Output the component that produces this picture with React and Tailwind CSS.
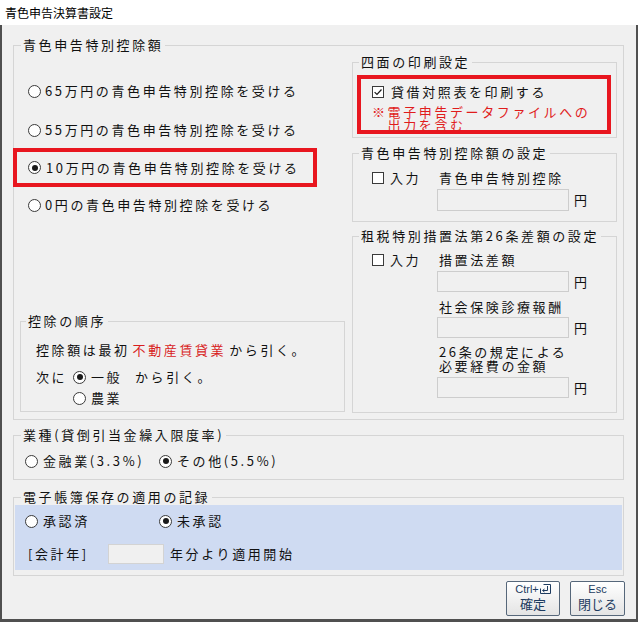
import React from "react";

const Radio = ({ checked }) => (
  <span className="inline-flex shrink-0 w-[13px] h-[13px] rounded-full border border-[#3a3a3a] bg-white items-center justify-center">
    {checked && <span className="block w-[6px] h-[6px] rounded-full bg-[#1a1a1a]" />}
  </span>
);

const Check = ({ checked }) => (
  <span className="inline-flex shrink-0 w-[12px] h-[12px] border border-[#3a3a3a] bg-white items-center justify-center">
    {checked && (
      <svg width="10" height="10" viewBox="0 0 10 10">
        <path d="M1.6 5.1 L4 7.5 L8.5 2.5" fill="none" stroke="#1a1a1a" strokeWidth="1.2" />
      </svg>
    )}
  </span>
);

const Field = ({ className }) => (
  <div className={`w-[132px] bg-[#f0f0f0] border border-[#cdcdcd] ${className}`} />
);

const EnterIcon = () => (
  <svg width="11" height="10" viewBox="0 0 11 10" className="ml-[1px]">
    <path d="M3.5 0.5 H10.5 V9.5 H0.5 V4.5" fill="none" stroke="#1d3b5f" strokeWidth="1" />
    <path d="M7.5 2 V6.5 H3" fill="none" stroke="#1d3b5f" strokeWidth="1" />
    <path d="M4.5 5 L2.5 6.5 L4.5 8" fill="none" stroke="#1d3b5f" strokeWidth="1" />
  </svg>
);

export default function App() {
  return (
    <div className="w-[638px] h-[622px] flex flex-col bg-[#f0f0f0] text-[#111] text-[13px] tracking-[2.6px] font-['Noto_Sans_CJK_JP',sans-serif] overflow-hidden">
      <div className="h-[25px] shrink-0 bg-white flex items-center pl-[5px] text-[12px] tracking-normal text-black">
        青色申告決算書設定
      </div>
      <div className="flex-1 flex flex-col border-x-2 border-b-[3px] border-[#505050] pl-[11px] pt-[12px]">
        {/* Outer group */}
        <fieldset className="w-[611px] h-[383px] border border-[#d5d5d5]">
          <legend className="ml-[7px] px-[2px] leading-[16px]">青色申告特別控除額</legend>
          <div className="flex">
            {/* Left column */}
            <div className="w-[338px] flex flex-col">
              <div className="mt-[28px] h-[20px] flex items-center pl-[14px]">
                <Radio />
                <span className="ml-[4px]">65万円の青色申告特別控除を受ける</span>
              </div>
              <div className="mt-[19px] h-[20px] flex items-center pl-[14px]">
                <Radio />
                <span className="ml-[4px]">55万円の青色申告特別控除を受ける</span>
              </div>
              <div className="mt-[8px] -ml-[1px] w-[304px] h-[39px] border-4 border-[#e8161f] flex items-center pl-[11px]">
                <Radio checked />
                <span className="ml-[5px]">10万円の青色申告特別控除を受ける</span>
              </div>
              <div className="mt-[8px] h-[20px] flex items-center pl-[14px]">
                <Radio />
                <span className="ml-[4px]">0円の青色申告特別控除を受ける</span>
              </div>

              <fieldset className="mt-[98px] ml-[6px] w-[325px] h-[99px] border border-[#d5d5d5]">
                <legend className="ml-[5px] px-[2px] leading-[16px]">控除の順序</legend>
                <div className="pt-[11px] pl-[15px] flex flex-col">
                  <div className="h-[20px] flex items-center">
                    <span>控除額は最初</span>
                    <span className="ml-[3px] text-[#d81e1e]">不動産賃貸業</span>
                    <span className="ml-[3px]">から引く。</span>
                  </div>
                  <div className="mt-[7px] h-[20px] flex items-center">
                    <span className="w-[37px]">次に</span>
                    <Radio checked />
                    <span className="ml-[5px] w-[44px]">一般</span>
                    <span>から引く。</span>
                  </div>
                  <div className="mt-[1px] h-[20px] flex items-center pl-[37px]">
                    <Radio />
                    <span className="ml-[5px]">農業</span>
                  </div>
                </div>
              </fieldset>
            </div>

            {/* Right column */}
            <div className="w-[265px] flex flex-col">
              <fieldset className="mt-[1px] h-[84px] border border-[#d5d5d5]">
                <legend className="ml-[6px] px-[2px] leading-[16px]">四面の印刷設定</legend>
                <div className="mt-[5px] ml-[4px] w-[254px] h-[59px] border-4 border-[#e8161f] flex flex-col pl-[11px] pt-[5px]">
                  <div className="h-[16px] flex items-center">
                    <Check checked />
                    <span className="ml-[7px] leading-[16px]">貸借対照表を印刷する</span>
                  </div>
                  <div className="mt-[5px] flex flex-col text-[#e01c1c]">
                    <div className="h-[13px] leading-[13px]">※電子申告データファイルへの</div>
                    <div className="h-[13px] leading-[13px] pl-[15.6px]">出力を含む</div>
                  </div>
                </div>
              </fieldset>

              <fieldset className="mt-[7px] h-[77px] border border-[#d5d5d5]">
                <legend className="ml-[6px] px-[2px] leading-[16px]">青色申告特別控除額の設定</legend>
                <div className="flex pt-[9px]">
                  <div className="w-[84px] pl-[19px] h-[16px] flex items-center">
                    <Check />
                    <span className="ml-[6px] leading-[16px]">入力</span>
                  </div>
                  <div className="flex flex-col">
                    <div className="h-[16px] leading-[16px] pl-[2px]">青色申告特別控除</div>
                    <div className="mt-[3px] flex items-center">
                      <Field className="h-[22px]" />
                      <span className="ml-[5px]">円</span>
                    </div>
                  </div>
                </div>
              </fieldset>

              <fieldset className="mt-[6px] h-[185px] border border-[#d5d5d5]">
                <legend className="ml-[6px] px-[2px] leading-[16px]">租税特別措置法第26条差額の設定</legend>
                <div className="flex pt-[8px]">
                  <div className="w-[84px] pl-[19px] h-[16px] flex items-center">
                    <Check />
                    <span className="ml-[6px] leading-[16px]">入力</span>
                  </div>
                  <div className="flex flex-col">
                    <div className="h-[16px] leading-[16px] pl-[2px]">措置法差額</div>
                    <div className="mt-[3px] flex items-center">
                      <Field className="h-[21px]" />
                      <span className="ml-[5px]">円</span>
                    </div>
                    <div className="mt-[7px] h-[16px] leading-[16px] pl-[2px]">社会保険診療報酬</div>
                    <div className="mt-[2px] flex items-center">
                      <Field className="h-[21px]" />
                      <span className="ml-[5px]">円</span>
                    </div>
                    <div className="mt-[7px] flex flex-col pl-[2px]">
                      <div className="h-[14px] leading-[14px]">26条の規定による</div>
                      <div className="h-[14px] leading-[14px]">必要経費の金額</div>
                    </div>
                    <div className="mt-[4px] flex items-center">
                      <Field className="h-[21px]" />
                      <span className="ml-[5px]">円</span>
                    </div>
                  </div>
                </div>
              </fieldset>
            </div>
          </div>
        </fieldset>

        {/* 業種 */}
        <fieldset className="mt-[7px] w-[611px] h-[53px] border border-[#d5d5d5]">
          <legend className="ml-[7px] px-[2px] leading-[16px]">業種(貸倒引当金繰入限度率)</legend>
          <div className="pt-[8px] pl-[11px] h-[28px] flex items-center">
            <div className="w-[134px] flex items-center">
              <Radio />
              <span className="ml-[5px]">金融業(3.3%)</span>
            </div>
            <div className="flex items-center">
              <Radio checked />
              <span className="ml-[5px]">その他(5.5%)</span>
            </div>
          </div>
        </fieldset>

        {/* 電子帳簿 */}
        <fieldset className="mt-[9px] w-[611px] h-[87px] border border-[#d5d5d5]">
          <legend className="ml-[7px] px-[2px] leading-[16px]">電子帳簿保存の適用の記録</legend>
          <div className="ml-[1px] w-[607px] h-[65px] bg-[#cfdbf2] flex flex-col pl-[10px] pt-[8px]">
            <div className="h-[16px] flex items-center">
              <div className="w-[134px] flex items-center">
                <Radio />
                <span className="ml-[5px]">承認済</span>
              </div>
              <div className="flex items-center">
                <Radio checked />
                <span className="ml-[5px]">未承認</span>
              </div>
            </div>
            <div className="mt-[15px] h-[20px] flex items-center pl-[3px]">
              <span className="w-[80px]">[会計年]</span>
              <div className="w-[56px] h-[20px] bg-[#f0f0f0] border border-[#d3d3d3]" />
              <span className="ml-[6px]">年分より適用開始</span>
            </div>
          </div>
        </fieldset>

        {/* Buttons */}
        <div className="mt-[5px] flex justify-end gap-[10px] pr-[11px] tracking-normal text-[#1d3b5f]">
          <div className="w-[54px] h-[35px] border border-[#56677a] rounded-[2px] bg-linear-to-b from-white to-[#e4e4e4] flex flex-col items-center">
            <div className="h-[13px] flex items-center text-[11px] font-['Liberation_Sans',sans-serif] leading-[12px]">
              Ctrl+
              <EnterIcon />
            </div>
            <div className="text-[13px] leading-[17px]">確定</div>
          </div>
          <div className="w-[55px] h-[35px] border border-[#56677a] rounded-[2px] bg-linear-to-b from-white to-[#e4e4e4] flex flex-col items-center">
            <div className="h-[13px] flex items-center text-[11px] font-['Liberation_Sans',sans-serif] leading-[12px]">
              Esc
            </div>
            <div className="text-[13px] leading-[17px]">閉じる</div>
          </div>
        </div>
      </div>
    </div>
  );
}
